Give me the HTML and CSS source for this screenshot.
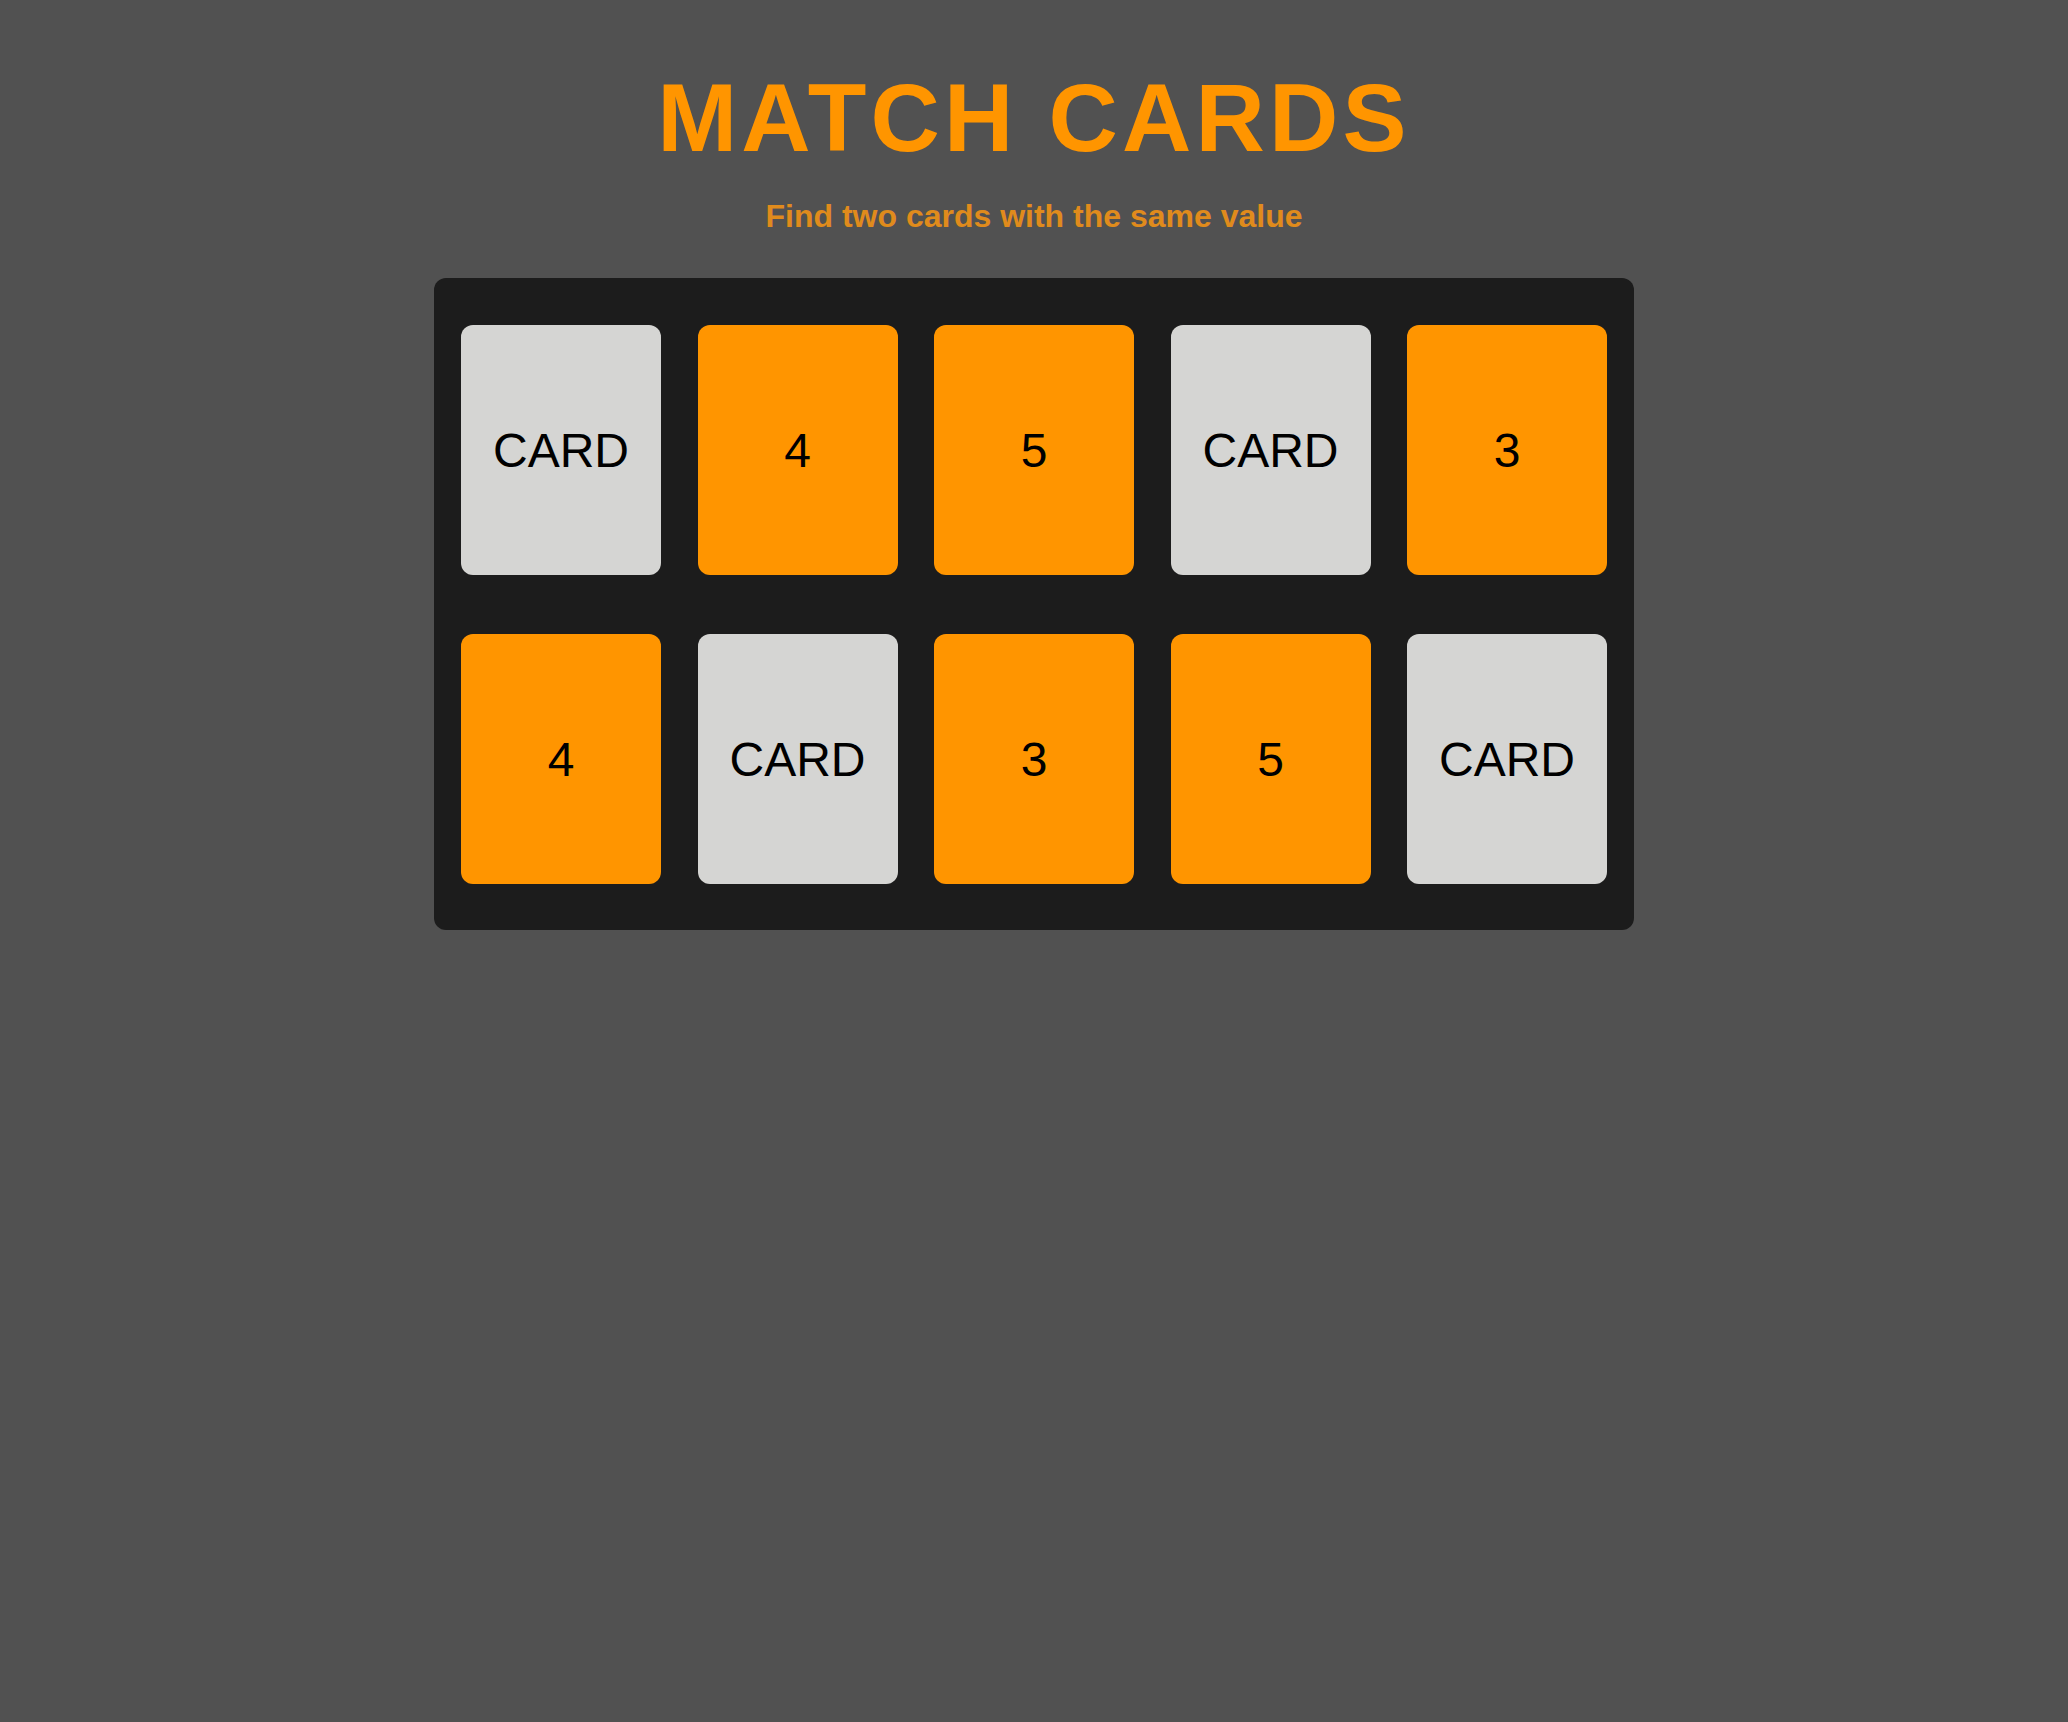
FILE: index.html
```html
<!DOCTYPE html>
<html lang="en">
<head>
<meta charset="utf-8">
<title>Match Cards</title>
<link rel="stylesheet" href="styles.css">
</head>
<body>
<main class="page">
  <h1 class="title">MATCH CARDS</h1>
  <p class="subtitle">Find two cards with the same value</p>
  <section class="board">
    <div class="card card-back">CARD</div>
    <div class="card card-face">4</div>
    <div class="card card-face">5</div>
    <div class="card card-back">CARD</div>
    <div class="card card-face">3</div>
    <div class="card card-face">4</div>
    <div class="card card-back">CARD</div>
    <div class="card card-face">3</div>
    <div class="card card-face">5</div>
    <div class="card card-back">CARD</div>
  </section>
</main>
</body>
</html>
```

FILE: styles.css
```css
html, body {
  margin: 0;
  padding: 0;
  background: #515151;
}

body {
  font-family: "Liberation Sans", Arial, sans-serif;
  min-height: 1722px;
}

.page {
  display: flex;
  flex-direction: column;
  align-items: center;
  padding-top: 70px;
}

.title {
  margin: 0;
  font-size: 96px;
  line-height: 96px;
  font-weight: 700;
  letter-spacing: 4.2px;
  color: #ff9500;
}

.subtitle {
  margin: 34px 0 0;
  font-size: 32px;
  line-height: 32px;
  font-weight: 700;
  color: #e08b1c;
}

.board {
  box-sizing: border-box;
  width: 1200px;
  margin-top: 46px;
  padding: 47px 0 46px;
  background: #1c1c1c;
  border-radius: 12px;
  display: grid;
  grid-template-columns: repeat(5, 200px);
  column-gap: 36.5px;
  row-gap: 59px;
  justify-content: center;
}

.card {
  height: 250px;
  border-radius: 12px;
  display: flex;
  align-items: center;
  justify-content: center;
  font-size: 48px;
  color: #000;
}

.card-back {
  background: #d5d5d3;
}

.card-face {
  background: #ff9500;
}
```
